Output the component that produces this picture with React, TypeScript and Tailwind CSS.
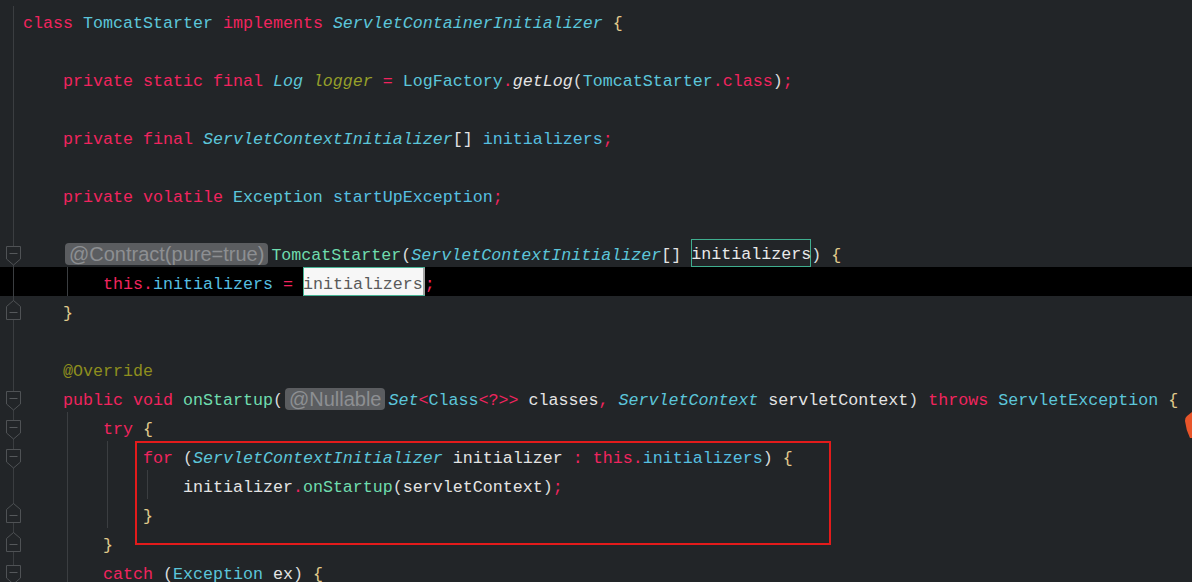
import React from "react";

type Tok = [string, string];

const K = "text-[#f0245e]";
const T = "text-[#5cc6da]";
const TI = "text-[#5cc6da] italic";
const M = "text-[#6fdcae]";
const F = "text-[#56bfe0]";
const D = "text-[#e4e4e4]";
const B = "text-[#e2cb8c]";
const P = "text-[#d9dcdc]";
const S = "text-[#96a02a] italic";
const A = "text-[#8e8e1e]";
const MI = "text-[#e4e4e4] italic";

type Marker = "open" | "close" | null;

type Line = {
  toks: React.ReactNode[];
  marker?: Marker;
  highlight?: boolean;
  guides?: number[];
};

const tk = (s: string, c: string, k: number) => (
  <span key={k} className={c}>
    {s}
  </span>
);

const toks = (arr: Tok[]) => arr.map(([s, c], i) => tk(s, c, i));

const Hint = ({ text }: { text: string }) => (
  <span className="inline-block align-top mt-[2px] h-[22px] ml-[2px] mr-[3px] px-[4px] rounded-[4px] bg-[#5b5d60] text-[#8d8f92] text-[20px] leading-[22px] font-['Liberation_Sans',sans-serif] not-italic">
    {text}
  </span>
);

const lines: Line[] = [
  {
    toks: toks([
      ["class ", K],
      ["TomcatStarter ", T],
      ["implements ", K],
      ["ServletContainerInitializer ", TI],
      ["{", B],
    ]),
  },
  { toks: [] },
  {
    toks: toks([
      ["    private static final ", K],
      ["Log ", TI],
      ["logger", S],
      [" = ", K],
      ["LogFactory", T],
      [".", K],
      ["getLog", MI],
      ["(", P],
      ["TomcatStarter", T],
      [".class", K],
      [")", P],
      [";", K],
    ]),
  },
  { toks: [] },
  {
    toks: toks([
      ["    private final ", K],
      ["ServletContextInitializer", TI],
      ["[] ", D],
      ["initializers", F],
      [";", K],
    ]),
  },
  { toks: [] },
  {
    toks: toks([
      ["    private volatile ", K],
      ["Exception ", T],
      ["startUpException", F],
      [";", K],
    ]),
  },
  { toks: [] },
  {
    marker: "open",
    toks: [
      <span key="a">{"    "}</span>,
      <Hint key="h" text="@Contract(pure=true)" />,
      <span key="b" className={M}>
        TomcatStarter
      </span>,
      <span key="c" className={P}>
        (
      </span>,
      <span key="d" className={TI}>
        ServletContextInitializer
      </span>,
      <span key="e" className={D}>
        {"[] "}
      </span>,
      <span
        key="f"
        className="inline-block align-top -mt-[2px] h-[28px] leading-[32px] text-[#e8e8e8] shadow-[inset_0_0_0_1px_#3fae8f]"
      >
        initializers
      </span>,
      <span key="g" className={P}>
        {") "}
      </span>,
      <span key="i" className={B}>
        {"{"}
      </span>,
    ],
  },
  {
    highlight: true,
    guides: [67],
    toks: [
      <span key="a" className={K}>
        {"        this."}
      </span>,
      <span key="b" className={F}>
        initializers
      </span>,
      <span key="c" className={K}>
        {" = "}
      </span>,
      <span
        key="d"
        className="inline-flex align-top -mt-[3px] h-[29px] bg-[#f7f7f7] text-[#5a5a5a] shadow-[inset_0_0_0_1px_#46b394]"
      >
        <span className="pt-[3px] leading-[29px]">initializers</span>
        <span className="w-[2px] my-px bg-[#a3a3a3]" />
      </span>,
      <span key="e" className={K}>
        ;
      </span>,
    ],
  },
  { marker: "close", toks: toks([["    }", B]]) },
  { toks: [] },
  { toks: toks([["    @Override", A]]) },
  {
    marker: "open",
    toks: [
      <span key="a" className={K}>
        {"    public void "}
      </span>,
      <span key="b" className={M}>
        onStartup
      </span>,
      <span key="c" className={P}>
        (
      </span>,
      <Hint key="h" text="@Nullable" />,
      ...toks([
        ["Set", TI],
        ["<", K],
        ["Class", T],
        ["<?>>", K],
        [" classes", D],
        [", ", K],
        ["ServletContext", TI],
        [" servletContext", D],
        [") ", P],
        ["throws ", K],
        ["ServletException ", T],
        ["{", B],
      ]).map((n, i) => <React.Fragment key={"x" + i}>{n}</React.Fragment>),
    ],
  },
  {
    marker: "open",
    guides: [67],
    toks: toks([
      ["        try ", K],
      ["{", B],
    ]),
  },
  {
    marker: "open",
    guides: [67, 107],
    toks: toks([
      ["            for ", K],
      ["(", P],
      ["ServletContextInitializer ", TI],
      ["initializer ", D],
      [": ", K],
      ["this.", K],
      ["initializers", F],
      [") ", P],
      ["{", B],
    ]),
  },
  {
    guides: [67, 107, 147],
    toks: toks([
      ["                initializer", D],
      [".", K],
      ["onStartup", M],
      ["(", P],
      ["servletContext", D],
      [")", P],
      [";", K],
    ]),
  },
  { marker: "close", guides: [67, 107], toks: toks([["            }", B]]) },
  { marker: "close", guides: [67], toks: toks([["        }", B]]) },
  {
    marker: "open",
    guides: [67],
    toks: toks([
      ["        catch ", K],
      ["(", P],
      ["Exception ", T],
      ["ex", D],
      [") ", P],
      ["{", B],
    ]),
  },
];

const GutterCell = ({ marker }: { marker?: Marker }) => (
  <svg width="23" height="29" className="block">
    <line x1="13.5" y1="0" x2="13.5" y2="29" stroke="#3b3e41" strokeWidth="1" />
    {marker === "open" && (
      <g>
        <path
          d="M6.5 8.5 H20.5 V21 L13.5 27 L6.5 21 Z"
          fill="#222528"
          stroke="#4f5255"
          strokeWidth="1"
        />
        <line x1="9.5" y1="15.5" x2="17.5" y2="15.5" stroke="#55585b" strokeWidth="1" />
      </g>
    )}
    {marker === "close" && (
      <g>
        <path
          d="M13.5 4.5 L20.5 10.5 V23.5 H6.5 V10.5 Z"
          fill="#222528"
          stroke="#4f5255"
          strokeWidth="1"
        />
        <line x1="9.5" y1="16.5" x2="17.5" y2="16.5" stroke="#55585b" strokeWidth="1" />
      </g>
    )}
  </svg>
);

const IndentGuides = ({ guides }: { guides?: number[] }) => (
  <>
    {(guides || []).map((g) => (
      <div
        key={g}
        className="pointer-events-none absolute top-0 h-[29px] w-px bg-[#3b3e41]"
        style={{ left: g }}
      />
    ))}
  </>
);

export default function App() {
  return (
    <div className="relative w-[1192px] h-[582px] overflow-hidden bg-[#222528] pt-[6px] font-['Liberation_Mono',monospace] text-[16.667px]">
      <div className="flex flex-col">
        {lines.map((l, i) => (
          <div
            key={i}
            className={"relative flex h-[29px] " + (l.highlight ? "bg-black" : "")}
          >
            <div className="w-[23px] shrink-0">
              <GutterCell marker={l.marker} />
            </div>
            <div className="pt-[3px] leading-[29px] whitespace-pre text-[#e4e4e4]">
              {l.toks}
            </div>
            <IndentGuides guides={l.guides} />
          </div>
        ))}
      </div>
      <div className="pointer-events-none absolute left-[135px] top-[441px] w-[696px] h-[104px] border-2 border-[#e31b1b]" />
      <svg className="absolute right-0 top-[412px]" width="8" height="26">
        <path d="M3 4 L8 0 V26 L6 26 Q2 18 1 9 Q0.5 6 3 4 Z" fill="#e8552a" />
      </svg>
    </div>
  );
}
